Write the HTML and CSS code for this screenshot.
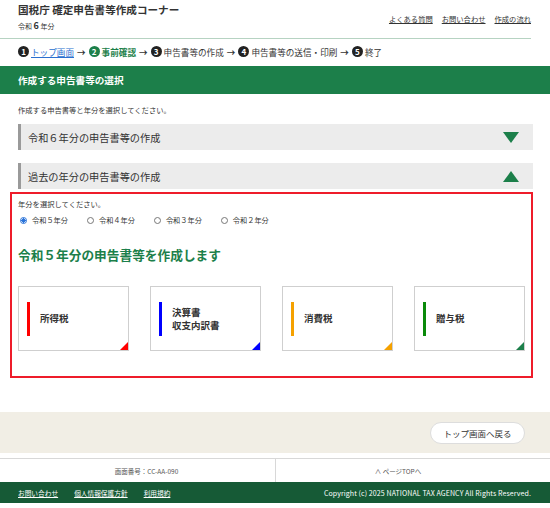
FILE: index.html
```html
<!DOCTYPE html>
<html lang="ja">
<head>
<meta charset="utf-8">
<link rel="stylesheet" href="styles.css">
</head>
<body>
<header class="head">
  <div class="head-left">
    <div class="site-title">国税庁 確定申告書等作成コーナー</div>
    <div class="year">令和 <b>6</b> 年分</div>
  </div>
  <nav class="head-links">
    <a href="#">よくある質問</a>
    <a href="#">お問い合わせ</a>
    <a href="#">作成の流れ</a>
  </nav>
</header>
<div class="rule"></div>
<div class="steps">
  <span class="num">1</span><a class="step-link" href="#">トップ画面</a><span class="arrow">→</span>
  <span class="num green">2</span><span class="cur">事前確認</span><span class="arrow">→</span>
  <span class="num">3</span><span>申告書等の作成</span><span class="arrow">→</span>
  <span class="num">4</span><span>申告書等の送信・印刷</span><span class="arrow">→</span>
  <span class="num">5</span><span>終了</span>
</div>
<div class="bar">作成する申告書等の選択</div>
<main class="main">
  <p class="lead">作成する申告書等と年分を選択してください。</p>
  <div class="acc">
    <span>令和６年分の申告書等の作成</span>
    <span class="tri down"></span>
  </div>
  <div class="acc acc2">
    <span>過去の年分の申告書等の作成</span>
    <span class="tri up"></span>
  </div>
  <section class="past">
    <p class="sub">年分を選択してください。</p>
    <div class="radios">
      <label class="radio"><span class="dot on"></span>令和５年分</label>
      <label class="radio"><span class="dot"></span>令和４年分</label>
      <label class="radio"><span class="dot"></span>令和３年分</label>
      <label class="radio"><span class="dot"></span>令和２年分</label>
    </div>
    <h2 class="make">令和５年分の申告書等を作成します</h2>
    <div class="cards">
      <div class="card c-red"><span class="line"></span><span class="label">所得税</span><span class="corner"></span></div>
      <div class="card c-blue"><span class="line"></span><span class="label">決算書<br>収支内訳書</span><span class="corner"></span></div>
      <div class="card c-orange"><span class="line"></span><span class="label">消費税</span><span class="corner"></span></div>
      <div class="card c-green"><span class="line"></span><span class="label">贈与税</span><span class="corner"></span></div>
    </div>
  </section>
</main>
<div class="back">
  <button class="back-btn">トップ画面へ戻る</button>
</div>
<div class="info">
  <div class="info-cell left">画面番号：CC-AA-090</div>
  <div class="info-cell right">∧ ページTOPへ</div>
</div>
<footer class="foot">
  <nav class="foot-links">
    <a href="#">お問い合わせ</a>
    <a href="#">個人情報保護方針</a>
    <a href="#">利用規約</a>
  </nav>
  <div class="copy">Copyright (c) 2025 NATIONAL TAX AGENCY All Rights Reserved.</div>
</footer>
</body>
</html>
```
FILE: styles.css
```css
* { box-sizing: border-box; }
html, body { margin: 0; padding: 0; background: #fff; }
body {
  width: 550px;
  font-family: "Noto Sans CJK JP", "Noto Sans", sans-serif;
  color: #333;
}
a { color: #333; }

.head {
  display: flex;
  justify-content: space-between;
  padding: 3px 19px 0 18px;
  height: 38px;
}
.site-title { font-size: 10.6px; font-weight: bold; line-height: 14px; }
.year { font-size: 7px; line-height: 10px; margin-top: 4px; }
.year b { font-size: 9px; }
.head-links { display: flex; gap: 9px; padding-top: 11px; }
.head-links a { font-size: 7.3px; line-height: 10px; }

.rule { height: 1px; background: #b6d3c2; width: 531px; }

.steps {
  display: flex;
  align-items: center;
  padding: 0 0 0 18px;
  height: 25px;
  font-size: 8.6px;
  color: #333;
  margin-bottom: 2px;
}
.num {
  display: inline-flex;
  align-items: center;
  justify-content: center;
  width: 11px; height: 11px;
  border-radius: 50%;
  background: #222;
  color: #fff;
  font-size: 8px;
  font-weight: bold;
  margin-right: 2px;
}
.num.green { background: #1c7f4a; }
.step-link { color: #2a6fcf; }
.cur { color: #1c7f4a; font-weight: bold; }
.arrow { font-weight: bold; margin: 0 3px; }

.bar {
  background: #1c7f4a;
  color: #fff;
  height: 28px;
  line-height: 28px;
  padding-left: 18px;
  font-size: 9.6px;
  font-weight: bold;
}

.main { padding: 0 17px 0 18px; }
.lead { margin: 0; font-size: 7.3px; line-height: 10px; padding-top: 11px; height: 30px; }
.acc {
  display: flex;
  align-items: center;
  justify-content: space-between;
  height: 26px;
  background: #ececec;
  border-left: 3px solid #9a9a9a;
  padding: 0 14px 0 7px;
  font-size: 10.2px;
  color: #333;
}
.acc2 { margin-top: 13px; }
.tri { width: 0; height: 0; border-left: 8px solid transparent; border-right: 8px solid transparent; }
.tri.down { border-top: 11px solid #1c7f4a; }
.tri.up { border-bottom: 11px solid #1c7f4a; }

.past {
  margin: 3px 0 0 -8px;
  width: 523px;
  height: 186px;
  border: 2px solid #ee1c2a;
  padding: 5px 0 0 6px;
}
.sub { margin: 0; font-size: 7.3px; line-height: 10px; }
.radios { display: flex; gap: 17px; margin-top: 6px; }
.radio { display: flex; align-items: center; font-size: 7.2px; line-height: 10px; }
.dot {
  width: 7px; height: 7px; border-radius: 50%;
  border: 1px solid #777; margin: 0 5px 0 2px; background: #fff;
}
.dot.on { border-color: #2a73d9; background: radial-gradient(circle, #2a73d9 0 2px, #fff 2.2px); }
.make {
  margin: 22px 0 0 0;
  font-size: 12.7px;
  line-height: 16px;
  color: #1c7f4a;
  font-weight: bold;
}
.cards { display: flex; gap: 21px; margin-top: 23px; }
.card {
  position: relative;
  display: flex;
  align-items: center;
  width: 111px;
  height: 65px;
  border: 1px solid #cfcfcf;
  background: #fff;
  padding-left: 8px;
}
.line { width: 3px; height: 34px; margin-right: 10px; flex: none; }
.label { font-size: 9.5px; font-weight: bold; line-height: 13px; color: #333; }
.corner {
  position: absolute; right: 0; bottom: 0;
  width: 0; height: 0;
  border-left: 8px solid transparent;
  border-bottom: 8px solid;
}
.c-red .line { background: #f00; } .c-red .corner { border-bottom-color: #f00; }
.c-blue .line { background: #00f; } .c-blue .corner { border-bottom-color: #00f; }
.c-orange .line { background: #f5a100; } .c-orange .corner { border-bottom-color: #f5a100; }
.c-green .line { background: #0a8a0a; } .c-green .corner { border-bottom-color: #1c7f4a; }

.back {
  margin-top: 34px;
  height: 41px;
  background: #f1eee5;
  display: flex;
  justify-content: flex-end;
  align-items: center;
  padding-right: 25px;
}
.back-btn {
  width: 95px; height: 22px;
  border-radius: 11px;
  border: 1px solid #ddd;
  background: #fff;
  font-family: inherit;
  font-size: 8.5px;
  color: #333;
  padding: 0;
}

.info {
  margin-top: 5px;
  display: grid;
  grid-template-columns: 275px 275px;
  height: 24px;
  border-top: 1px solid #d8d8d8;
}
.info-cell {
  display: flex; align-items: center; justify-content: center;
  font-size: 6.5px; color: #555;
}
.info-cell.left { padding-left: 18px; }
.info-cell.right { padding-right: 30px; border-left: 1px solid #d8d8d8; }

.foot {
  background: #165a36;
  height: 21px;
  display: flex;
  align-items: center;
  justify-content: space-between;
  padding: 0 19px 0 18px;
  color: #fff;
}
.foot-links { display: flex; gap: 16px; }
.foot-links a { color: #fff; font-size: 6.7px; }
.copy { font-size: 7px; letter-spacing: 0.1px; }
```
